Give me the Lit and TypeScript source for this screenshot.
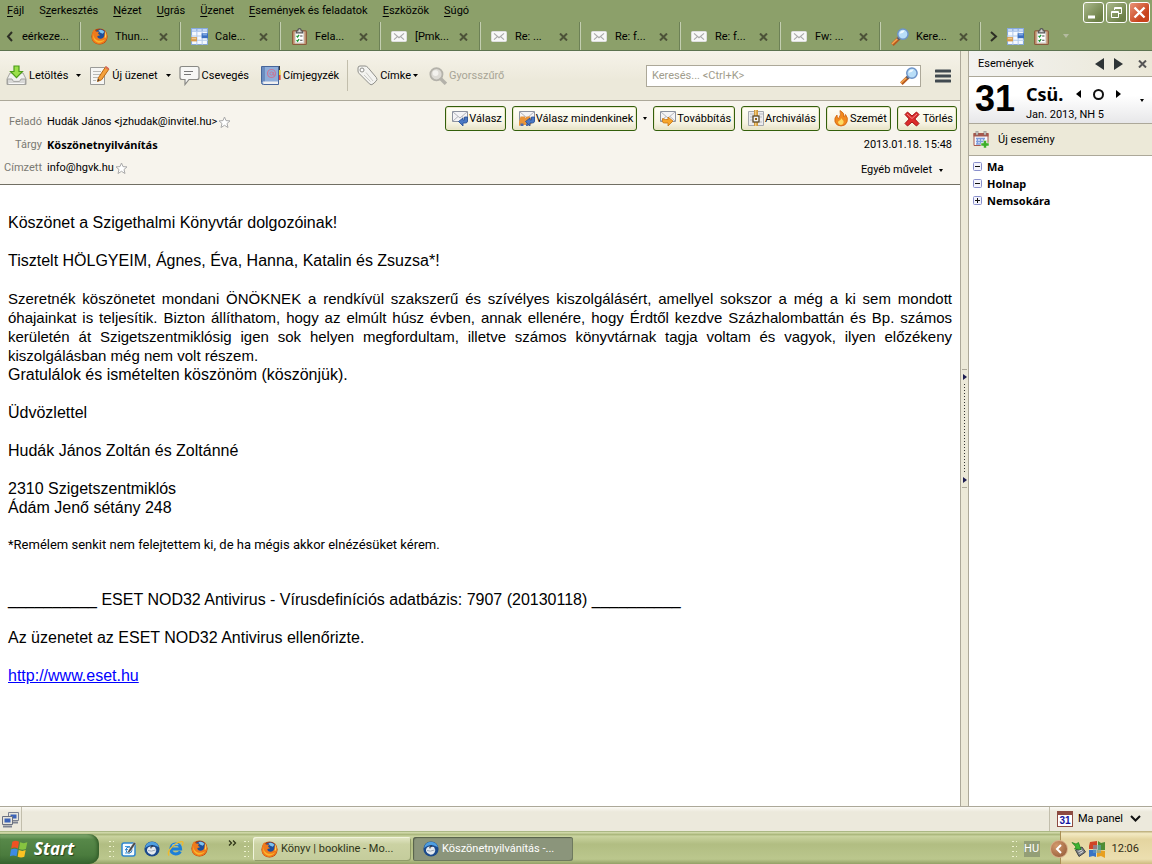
import { LitElement, html, css, svg, TemplateResult } from "lit";
import { customElement } from "lit/decorators.js";

const icon = (size: number, box: string, body: TemplateResult) =>
  html`<svg class="ico" width=${size} height=${size} viewBox=${box} aria-hidden="true">${body}</svg>`;

const firefox = () => icon(17, "0 0 16 16", svg`
  <circle cx="8" cy="8" r="7.6" fill="#b5410b"/><circle cx="8.8" cy="6.6" r="5.4" fill="#1d4f9c"/>
  <path d="M7 2.2Q10 .8 12.6 3.6L11 5.4 8.4 4.2z" fill="#7fc3ee"/>
  <path d="M.8 6Q1 2.8 3.2 1.2L4.6 3.4 7.6 3.6 6.6 5.4 8.6 6.8 6 7.6Q6 10.4 9.4 10.2 12.4 9.4 12.6 6L13.2 2.6Q16.4 6.4 14.8 10.6 12.4 15.2 8 15.2 2.4 14.8.8 10z" fill="#ee7a1b"/>
  <path d="M2 5Q2 9 5 11 8.6 13.4 13.4 10.6 10.6 14.4 6.8 13.8 2.4 12.6 2 8z" fill="#f9b52c"/>
  <path d="M13.2 3Q15 5.6 14.2 8.6L12.8 9.4Q13.6 6 13.2 3z" fill="#fbd05a"/>`);

const calendar = () => icon(17, "0 0 16 16", svg`
  <path d="M.5.5h15v15H.5z" fill="#f5f9ff" stroke="#87a9d8"/>
  <path d="M0 0h16v3.4H0z" fill="#86a9df"/><path d="M1 1h4v2H1zM6 1h4v2H6zM11 1h4v2h-4z" fill="#c5d8f4"/>
  <path d="M5.5 3v13M10.5 3v13M0 7.5h16M0 11.5h16" stroke="#b4cbeb"/>
  <path d="M10 5h6v4.6h-6z" fill="#3b6fc0"/><path d="M11 5.6h4v1.4h-4z" fill="#7da7e4"/>
  <path d="M0 8.6h5.6v4H0z" fill="#d79b4a"/><path d="M.8 9.4h4v1.2h-4z" fill="#f0c98d"/>`);

const tasks = () => icon(17, "0 0 16 16", svg`
  <rect x="1.5" y="2.5" width="13" height="13" rx="1" fill="#c49672" stroke="#8a5a3c"/>
  <path d="M4 4h8v10H4z" fill="#fff" stroke="#d9d9d9"/>
  <path d="M5 4.6V2.8h1.4Q6.4.6 8 .6t1.6 2.2H11v1.8z" fill="#d8d8d8" stroke="#555"/>
  <path d="M5.2 7.4l1 1 1.4-2M5.2 11.4l1 1 1.4-2" stroke="#1a9a32" stroke-width="1.2" fill="none"/>
  <path d="M8.6 7.6h2.2M8.6 11.6h2.2" stroke="#444"/>`);

const mail = () => icon(17, "0 0 17 17", svg`
  <rect x=".5" y="3.5" width="15" height="10" rx="1" fill="#f8f8f8" stroke="#dedede"/>
  <path d="M3 5.4l5 4.2 5-4.2M3 11.6l3.4-3M13 11.6l-3.4-3" fill="none" stroke="#aaa" stroke-width="1.2"/>`);

const magnifier = (gray = false) => icon(18, "0 0 16 16", gray
  ? svg`<path d="M10 10l5 5" stroke="#b4b2aa" stroke-width="3"/><circle cx="6.6" cy="6.4" r="5.4" fill="#dddbd5" stroke="#b4b2aa" stroke-width="1.6"/><circle cx="5.8" cy="5.4" r="2.6" fill="#f3f2ee"/>`
  : svg`<path d="M7.4 8.8l-6.2 6" stroke="#b75a1f" stroke-width="3.2"/><path d="M6.6 8.8l-5.8 5.4" stroke="#f5a64f" stroke-width="1.4"/><path d="M7.8 8.4L6 10" stroke="#555d70" stroke-width="2.6"/><circle cx="10.6" cy="5.4" r="4.6" fill="#b9def8" stroke="#6c93c8" stroke-width="1.3"/><path d="M7.6 5Q8.4 1.8 12 2.2 11.4 4.6 7.6 5z" fill="#f2faff"/>`);

const download = () => icon(21, "0 0 21 21", svg`
  <path d="M1 14l3-6h13l3 6v5.5H1z" fill="#f1f1ef" stroke="#a3a39f"/>
  <path d="M1.5 14H6l1.4 2.4h6.2L15 14h4.5v5H1.5z" fill="#d8d8d6" stroke="#a3a39f"/><path d="M2.5 18.5h16" stroke="#f8f8f8"/>
  <path d="M8 1h5v5.5h3.4L10.5 12.6 4.6 6.500H8z" fill="#9be04a" stroke="#4c9c19" stroke-width="1.2"/>`);

const compose = () => icon(21, "0 0 21 21", svg`
  <path d="M1.500 2.500h14v17h-14z" fill="#f6f6f4" stroke="#9b9b98"/>
  <path d="M4 6.500h8M4 9.500h7M4 12.500h5M4 15.500h3" stroke="#b9b9b6"/>
  <path d="M8.500 16.500L9.400 12.800 16.600 1.800 20 4 12.600 14.800z" fill="#f4a13c" stroke="#b96712"/>
  <path d="M16 2.800l3.200 2.200 1-1.600L17 1z" fill="#d96a5a"/><path d="M8.500 16.500l.5-2.500 1.800 1z" fill="#333"/>`);

const chat = () => icon(21, "0 0 21 21", svg`
  <path d="M3 1.500h15q2 0 2 2v9q0 2-2 2h-8L6 19.500v-5H3q-2 0-2-2v-9q0-2 2-2z" fill="#f7f7f5" stroke="#898985" stroke-width="1.200"/>
  <path d="M5 6.500h9M5 9.500h7" stroke="#777" stroke-width="1.200"/>`);

const book = () => icon(21, "0 0 21 21", svg`
  <path d="M18 1h2v5h-2z" fill="#3b3b3b"/><path d="M18 5h2.600v5H18z" fill="#e9d630"/><path d="M18 10h2.600v5H18z" fill="#e0463a"/>
  <path d="M1.500 1.500h17v18h-15q-2 0-2-2z" fill="#8fadd9" stroke="#46659a"/><path d="M2 2h3v15H2z" fill="#6a8cc0"/>
  <path d="M3 16.500h15v2.500H3.500z" fill="#f0f0f0"/>
  <circle cx="11.500" cy="8.500" r="4" fill="none" stroke="#c6799a" stroke-width="1.200"/><circle cx="11.500" cy="8.500" r="1.600" fill="none" stroke="#c6799a"/><path d="M13.300 7v3.200h2" stroke="#c6799a" fill="none"/>`);

const tag = () => icon(21, "0 0 21 21", svg`
  <path d="M1 3q0-2 2-2h5q1.600 0 3 1.600l8.400 10q1.400 2-.4 3.600L16 19q-2 1.600-3.600-.2L2.200 8.600Q1 7.400 1 6z" fill="#f3f3f0" stroke="#8f8f8a"/>
  <circle cx="5" cy="5" r="2" fill="#fff" stroke="#8f8f8a"/><path d="M9 7.500l7 8.500M7 10l6.500 6.500" stroke="#c9c9c5"/>`);

const envelope = (arrow: string, edge: string, flip: boolean, people = false) => icon(17, "0 0 17 17", svg`
  <path d="M.5 1.500h15v10H.5z" fill="#f4f4f6" stroke="#8d93a0"/><path d="M1 2l7 6 7-6M1 11l5-4.500M15 11l-5-4.500" fill="none" stroke="#b3b5bb"/>
  ${people ? svg`<path d="M0 16v-4l1.500-5.500h4l1 1.500 1-1.500H11l1.500 4V14l-2 1H2z" fill="#e8943a"/><path d="M1.500 16v-2.500h3V16zM7 16v-2.500h2.500V16z" fill="#4d6cab"/>` : ""}
  ${flip
    ? svg`<path d="M2.500 8.500v3q0 1.500 2 1.500H8v3l5-5-5-4v2.500H5.500z" fill=${arrow} stroke=${edge} stroke-width=".8"/>`
    : svg`<path d="M15.500 7v4q0 2-2 2H11v3L6.500 11.500 11 8v2h1.500V7z" fill=${arrow} stroke=${edge} stroke-width=".8"/>`}`);

const archive = () => icon(17, "0 0 17 17", svg`
  <path d="M.5 1.500h15v14H.5z" fill="#ececee" stroke="#a5a8ae"/><path d="M2 4h4M2 7h3M2 10h3M11 4h4M12 7h2M12 12h2" stroke="#b8bbc2"/>
  <path d="M6 0h4v16H6z" fill="#d29a3d"/><path d="M7 0h1.400v16H7z" fill="#f0ca7b"/>
  <rect x="5" y="6" width="6" height="6" fill="#f4f4f4" stroke="#5a4a2c" stroke-width="1.300"/><path d="M7 8h2v2H7z" fill="#8f5f16"/>`);

const flame = () => icon(17, "0 0 17 17", svg`
  <path d="M7 .5Q12 3 11 7q1 0 1.500-2.500Q15.500 8 14 12q-1.500 4-6 4-4.500 0-6-4Q1 7.500 4 5q-.2 3 1.500 3.500Q8.500 5 7 .5z" fill="#f18a1d" stroke="#d0620e" stroke-width=".8"/>
  <path d="M8 8q3 2.500 2.500 5-.8 2-2.700 2-2.300-.2-2.800-2.500Q5 11 6.500 10.500 8 10 8 8z" fill="#fdda62"/>`);

const cross = () => icon(16, "0 0 16 16", svg`
  <path d="M1 3.500L3.500 1 8 5 12.500 1 15 3.500 10.800 8 15 12.500 12.500 15 8 11l-4.500 4L1 12.500 5.200 8z" fill="#dd2b2b" stroke="#a51212"/><path d="M3 3l5 4.500L13 3" stroke="#f38a84" fill="none"/>`);

const star = () => icon(13, "0 0 13 13", svg`
  <path d="M6.500 1l1.500 3.600 4 .3-3 2.600 1 4-3.500-2.200L3 11.500l1-4-3-2.600 4-.3z" fill="#fff" stroke="#a9a9a9"/>`);

const newEvent = () => icon(17, "0 0 17 17", svg`
  <path d="M1 2.500h14v12H1z" fill="#f7f7fb" stroke="#a6584d"/><path d="M.5 2h15v3.500H.5z" fill="#a6584d"/><path d="M3 0h2v4H3zM11 0h2v4h-2z" fill="#ded8d0" stroke="#777" stroke-width=".6"/>
  <path d="M3 7.500h9M3 10.500h9M3 13h7M4.500 7v6M7.500 7v6M10.500 7v6" stroke="#7d9ddc" stroke-width="1.400"/>
  <path d="M10.500 9.500h3V12H16v3h-2.500v2h-3v-2H8v-3h2.500z" fill="#3fae2a" stroke="#e8f8e0" stroke-width=".5"/>`);

const day31 = () => html`<span class="day31"><span>31</span></span>`;

const network = () => icon(17, "0 0 17 17", svg`
  <path d="M6.500 1.500h10v8h-10z" fill="#e8e6dc" stroke="#7c8290"/><path d="M8.500 3.500h6v4h-6z" fill="#3b63b8"/><path d="M8 11.500h8" stroke="#7c8290" stroke-width="2"/>
  <path d="M.5 5.500h10v8H.5z" fill="#e8e6dc" stroke="#6a7080"/><path d="M2.500 7.500h6v4h-6z" fill="#3b63b8"/><path d="M1 15.500h9" stroke="#7c8290" stroke-width="2"/>`);

const flag = (s: number) => icon(s, "0 0 18 18", svg`
  <path d="M3 2.500Q6 .8 9 2.500L8 8.500Q5 7 2 8.500z" fill="#ee5124"/><path d="M10 3Q13 4.500 16.500 3L15.200 9Q12 10.500 9 9z" fill="#86c440"/>
  <path d="M1.800 9.500Q5 8 7.800 9.500L6.800 15.500Q4 14 .8 15.500z" fill="#3d8be4"/><path d="M8.800 10Q12 11.500 15 10L13.800 16Q11 17.500 7.800 16z" fill="#fcc223"/>`);

const notes = () => icon(16, "0 0 16 16", svg`
  <rect x="1" y="2" width="13" height="13" rx="2" fill="#f4faff" stroke="#2f86cf" stroke-width="1.500"/><path d="M4 5.500h5M4 8.500h3M4 12h5" stroke="#3f9be0" stroke-width="1.200"/>
  <circle cx="8" cy="9" r="3" fill="none" stroke="#2f7fc8"/><path d="M7 10l6-9 2 1.500-6 8.500-2.500 1z" fill="#4a4a4a" stroke="#eee" stroke-width=".4"/>`);

const thunderbird = () => icon(16, "0 0 16 16", svg`
  <circle cx="8" cy="8" r="7.600" fill="#1b4a8c"/><path d="M1 7Q2 1.200 8 .8q5.500.4 7 5.500L12 5Q7 2.500 1 7z" fill="#4f9fe0"/>
  <path d="M3 10Q2.600 6.500 6.500 5.600L11 6q2 2.500.6 5.400-1.600 2.600-4.600 2.200Q4 13 3 10z" fill="#e6ebf0"/>
  <path d="M4 9.500q3 1.500 7.500-.5" stroke="#9aa8b8" fill="none"/><path d="M6 5l2.800-.8L8.500 6.200z" fill="#2a2f38"/><circle cx="7" cy="6.800" r=".7" fill="#222"/>`);

const explorer = () => icon(17, "0 0 17 17", svg`
  <path d="M13.400 11.500Q11.800 14 8.700 14 4 13.600 3.800 9 4.200 4.400 8.700 4 13.400 4.400 13.600 9H5" fill="none" stroke="#1c7fd8" stroke-width="3"/>
  <path d="M5 5.500Q8 3 11.500 4.800" fill="none" stroke="#7cc6f6" stroke-width="1.200"/>
  <path d="M2 15.500Q-.5 12 6 6 12.500 1 15.500 1.800q1.200 1-.3 3.700" fill="none" stroke="#f0b92c" stroke-width="1.300"/>`);

const usb = () => icon(15, "0 0 15 15", svg`
  <path d="M4.500 8l6.500-3 3.500 5L8 14.500z" fill="#7d8185" stroke="#3f4347"/><path d="M7.500 9.500l3.500-1.500M8.500 11.500l3.500-2" stroke="#e2e4e6"/>
  <path d="M1 .5l4 1.500 2.500-1.500L10 7.500 3.500 7l1.500-2z" fill="#3fb534" stroke="#1d7a18" stroke-width=".7"/>`);

const winsq = () => icon(17, "0 0 17 17", svg`
  <path d="M1 1l7-1v8H0V5z" fill="#cf4327"/><path d="M9 0l3 2 4-1v8H9z" fill="#4f8d34"/><path d="M0 9h7v7l-3-1-4 1z" fill="#3a74c4"/><path d="M8 9l8 1v7l-4-2-4 1z" fill="#e8a020"/><path d="M4 4h8v8H4z" fill="#6aa8c8" opacity=".55"/>`);

const chevron = (d: string, w: number, h: number, color = "#2d2f25") =>
  html`<svg class="ico" width=${w} height=${h} viewBox="0 0 ${w} ${h}" aria-hidden="true"><path d=${d} fill="none" stroke=${color} stroke-width="2"/></svg>`;

const closeX = (color = "#4c5238") => html`<svg class="ico" width="9" height="8" viewBox="0 0 9 8" aria-hidden="true"><path d="M1 .5L8 7.500M8 .5L1 7.500" stroke=${color} stroke-width="2"/></svg>`;

const tri = (dir: "l" | "r" | "d", w: number, h: number, color = "#000") => {
  const d = dir === "l" ? `M${w} 0V${h}L0 ${h / 2}z` : dir === "r" ? `M0 0V${h}L${w} ${h / 2}z` : `M0 0H${w}L${w / 2} ${h}z`;
  return html`<svg class="ico" width=${w} height=${h} viewBox="0 0 ${w} ${h}" aria-hidden="true"><path d=${d} fill=${color}/></svg>`;
};

@customElement("app-root")
export class AppRoot extends LitElement {
  static styles = css`
    :host { display: flex; flex-direction: column; min-height: 100vh; overflow: hidden; background: #8ca06a;
      font: 11px/14px Roboto, "Noto Sans", sans-serif; color: #000; }
    * { box-sizing: border-box; }
    button, input { font: inherit; color: inherit; }
    button { background: none; border: 0; padding: 0; margin: 0; display: flex; align-items: center; white-space: nowrap; }
    .ico { display: block; flex: none; }
    .bold { font-family: "Noto Sans", sans-serif; font-weight: 700; }

    .top { position: relative; }
    .menu { display: flex; gap: 15px; height: 22px; padding: 0 7px; align-items: center; }
    .menu u { text-underline-offset: 2px; }
    .win { position: absolute; top: 2px; right: 2px; display: flex; gap: 2px; }
    .win button { width: 21px; height: 21px; border: 1px solid #fff; border-radius: 3px; justify-content: center;
      background: linear-gradient(135deg, #a9b88b, #6d8047 80%); }
    .win .x { background: linear-gradient(135deg, #e99478, #c8421c 70%); }
    .tabs { display: flex; height: 29px; border-bottom: 1px solid #5c7350; }
    .tab { display: flex; align-items: center; width: 100px; padding-top: 1px; padding-left: 10px; padding-right: 12px; border-left: 1px solid #c3ceb0;
      box-shadow: -1px 0 #6d8156; }
    .tab .label { flex: 1; gap: 7px; }
    .first { width: 80px; border: 0; box-shadow: none; padding: 1px 0 0 6px; gap: 7px; }
    .more { display: flex; flex: 1; align-items: center; padding-left: 8px; gap: 9px; border-left: 1px solid #c3ceb0; box-shadow: -1px 0 #6d8156; }
    .gray { padding-left: 4px; }

    .main { display: flex; flex: 1; background: #ece9d8; }
    .mailcol { flex: 1; min-width: 0; display: flex; flex-direction: column; border-right: 1px solid #aca899; }
    .toolbar { display: flex; align-items: center; height: 50px; padding: 0 9px 0 6px; border-bottom: 1px solid #aca899;
      background: linear-gradient(#f6f3ea, #ece9da 60%); }
    .tool { gap: 2px; }
    .drop { padding: 8px; }
    .tool .ico + .ico, .tag { margin-left: 0; }
    .tool.next { margin-left: 11px; }
    .off { color: #a8a596; }
    .sep { width: 1px; height: 31px; background: #c2beac; margin: 0 9px 0 8px; }
    .search { display: flex; align-items: center; width: 275px; height: 22px; margin-left: auto; margin-right: 14px; border: 1px solid #aca899; background: #fff; padding: 0 2px 0 5px; }
    .search input { flex: 1; min-width: 0; border: 0; outline: 0; padding: 0; background: none; }
    .search input::placeholder { color: #a09c8c; opacity: 1; }

    .head { display: flex; justify-content: space-between; height: 84px; background: #f7f4ed; border-bottom: 1px solid #716f64; }
    .fields { display: grid; grid-template-columns: 42px auto; column-gap: 5px; row-gap: 1px; margin: 0; padding-top: 10px; align-content: start; }
    .fields dt { text-align: right; color: #7b7a73; line-height: 22px; white-space: nowrap; }
    .fields dd { margin: 0; display: flex; align-items: center; gap: 1px; line-height: 22px; }
    .actions { display: flex; flex-direction: column; align-items: flex-end; padding: 5px 3px 0 0; }
    .btns { display: flex; align-items: center; gap: 6px; }
    .btn { height: 25px; border: 1px solid #335f0b; border-radius: 3px; padding: 0 3px 0 6px;
      background: linear-gradient(#fffff8, #f6f3e2 70%, #e6e2c6); box-shadow: inset 0 0 0 1px #eae7c8; }
    .btn.roomy { gap: 3px; }
    .date { line-height: 22px; margin-top: 3px; padding-right: 5px; }
    .other { line-height: 22px; margin-top: 3px; padding-right: 14px; gap: 7px; }

    .body { flex: 1; background: #fff; padding: 28px 8px 8px; font: 16px/19px "Liberation Sans", Arial, sans-serif; }
    .body p { margin: 0 0 19px; }
    .body .just { font-size: 15px; text-align: justify; margin: 0; }
    .just span { display: block; text-align-last: justify; }
    .just span:last-child { text-align-last: left; }
    .body .small { font: 13px/18px Roboto, "Noto Sans", sans-serif; margin-bottom: 36px; }
    .body a { color: #00f; }

    .split { width: 7px; display: flex; flex-direction: column; align-items: center; justify-content: center; gap: 4px; }
    .dots { width: 1px; height: 89px; background: repeating-linear-gradient(#333 0 1px, transparent 1px 3px); }
    .tick { width: 5px; height: 1px; background: #aca899; }

    .side { width: 184px; border-left: 1px solid #aca899; background: #fff; }
    .sidehead { display: flex; align-items: center; height: 26px; padding: 0 5px 0 9px; border-bottom: 1px solid #aca899;
      background: linear-gradient(90deg, #f2f2f0, #ebe8d8); }
    .sidehead .t { flex: 1; }
    .sidehead .a { margin-right: 10px; }
    .sidehead .b { margin-right: 15px; }
    .day { display: flex; height: 47px; padding: 0 8px 0 6px; border-bottom: 1px solid #aca899; background: linear-gradient(#fff 40%, #e7e7e9); }
    .num { font: 700 36px/44px "Liberation Sans", Arial, sans-serif; width: 51px; }
    .when { flex: 1; padding-top: 5px; line-height: 18px; }
    .wd { display: flex; align-items: center; font-size: 18px; line-height: 24px; }
    .nav { display: flex; align-items: center; gap: 12px; margin-left: auto; margin-right: 19px; }
    .ring { width: 11px; height: 11px; border: 2px solid #111; border-radius: 50%; }
    .caret { align-self: center; }
    .newev { width: 100%; height: 32px; padding-left: 4px; gap: 8px; background: #ece9d8; border-bottom: 1px solid #aca899; }
    .tree { list-style: none; margin: 0; padding: 2px 0 0 4px; }
    .tree li { display: flex; align-items: center; gap: 5px; height: 17px; }

    .status { display: flex; align-items: stretch; height: 25px; border-top: 1px solid #aca899; background: linear-gradient(#fbfaf5, #ece9dc 20%, #ece9dc); }
    .status .net { display: flex; align-items: center; padding: 0 2px; border-right: 1px solid #c2beac; }
    .panel { margin-left: auto; padding: 0 11px 0 7px; gap: 5px; border-left: 1px solid #c2beac; }
    .panel .ico { margin-left: 2px; }
    .day31 { width: 16px; height: 16px; border: 1px solid #8d4b41; border-top-width: 4px; background: #fff; display: flex; justify-content: center; align-items: center; font: 700 10px/10px "Liberation Sans", sans-serif; color: #1414a0; }

    .taskbar { display: flex; align-items: center; height: 33px;
      background: linear-gradient(#9aa873, #dfe7b9 6%, #a3b074 9%, #c9d39f 16%, #b1bd82 40%, #bbc78d 85%, #93a066); }
    .start { width: 99px; height: 30px; margin-top: 3px; padding-left: 9px; gap: 5px; border-radius: 0 10px 10px 0; color: #fff; font: italic 700 17px/24px "Open Sans", sans-serif;
      text-shadow: 1px 1px 1px #26431b; background: linear-gradient(#8fb57b, #578849 18%, #4b7c3e 70%, #376530); box-shadow: inset -2px 0 3px #36602b; align-self: flex-start; }
    .grip { width: 6px; height: 18px; background: radial-gradient(circle, #eef2cf 1px, transparent 1px) 0 0 / 4px 5px; flex: none; }
    .quick { display: flex; align-items: center; gap: 7px; padding: 2px 0 0 7px; }
    .grip.g1 { margin-left: 9px; }
    .raq { margin: 0 6px 10px 20px; }
    .task { height: 24px; width: 158px; margin: 3px 0 0 2px; border-radius: 3px; padding-left: 8px; gap: 3px; color: #2f3518; background: linear-gradient(#e3e7c6, #cbd2a3 30%, #c4cc9b); box-shadow: inset 1px 1px #f1f4dc, inset -1px -1px #919c6a; }
    .task.on { color: #fff; width: 160px; background: #8b957b; box-shadow: inset 1px 1px 1px #555f49, inset -1px -1px #6f7a5f; padding-left: 10px; }
    .task.f { margin-left: 4px; }
    .lang { background: #939e76; color: #fff; width: 16px; height: 16px; display: grid; place-items: center; margin: 3px 0 0 7px; }
    .tray { display: flex; align-items: center; align-self: stretch; gap: 3px; margin-left: 20px; padding: 3px 13px 0 0; border-left: 1px solid #a88f55; background: linear-gradient(#b6a874, #f3eac3 8%, #e4d5a0 25%, #ecdfb0 85%, #cdbb80); color: #2f2a14; }
    .round { width: 18px; height: 18px; border-radius: 50%; margin-left: -11px; border: 1px solid #d9b08b; background: radial-gradient(circle at 35% 30%, #d49a6d, #8d5432); justify-content: center; }
    .clock { margin-left: 3px; }
    .rest { margin-left: auto; display: flex; align-items: center; align-self: stretch; }
  `;

  private menu = [["", "F", "ájl"], ["S", "z", "erkesztés"], ["", "N", "ézet"], ["", "U", "grás"], ["", "Ü", "zenet"], ["", "E", "semények és feladatok"], ["", "E", "szközök"], ["", "S", "úgó"]];
  private tabs: [() => TemplateResult, string][] = [[firefox, "Thun..."], [calendar, "Cale..."], [tasks, "Fela..."], [mail, "[Pmk..."], [mail, "Re: ..."], [mail, "Re: f..."], [mail, "Re: f..."], [mail, "Fw: ..."], [() => magnifier(), "Kere..."]];

  render() {
    return html`
      <header class="top">
        <nav class="menu">${this.menu.map(([a, b, c]) => html`<button><span>${a}<u>${b}</u>${c}</span></button>`)}</nav>
        <div class="win">
          <button aria-label="Kis méret"><svg width="19" height="19" viewBox="0 0 19 19"><path d="M4 14h7" stroke="#fff" stroke-width="3"/></svg></button>
          <button aria-label="Előző méret"><svg width="19" height="19" viewBox="0 0 19 19" fill="none" stroke="#fff"><path d="M4.500 8.500h7v6h-7zM4 9.500h8M7.500 7V4.500h7v6H12M7 5.500h8"/></svg></button>
          <button class="x" aria-label="Bezárás"><svg width="19" height="19" viewBox="0 0 19 19"><path d="M4.500 4.500l10 10M14.500 4.500l-10 10" stroke="#fff" stroke-width="2.400"/></svg></button>
        </div>
        <div class="tabs">
          <div class="tab first"><button aria-label="Vissza">${chevron("M6 1L2 5.500 6 10", 9, 11)}</button><button>eérkeze...</button></div>
          ${this.tabs.map(([i, t]) => html`<div class="tab"><button class="label">${i()}<span>${t}</span></button><button aria-label="Lap bezárása">${closeX()}</button></div>`)}
          <div class="more"><button aria-label="Előre">${chevron("M2 1L7 5.500 2 10", 9, 11)}</button><button aria-label="Naptár">${calendar()}</button><button aria-label="Feladatok">${tasks()}</button><button class="gray" aria-label="Lapok">${tri("d", 6, 4, "#b4bba0")}</button></div>
        </div>
      </header>
      <main class="main">
        <section class="mailcol">
          <div class="toolbar">
            <button class="tool">${download()}Letöltés</button><button class="drop" aria-label="Letöltés menü">${tri("d", 5, 3)}</button>
            <button class="tool">${compose()}Új üzenet</button><button class="drop" aria-label="Üzenet menü">${tri("d", 5, 3)}</button>
            <button class="tool">${chat()}Csevegés</button>
            <button class="tool next">${book()}Címjegyzék</button>
            <span class="sep"></span>
            <button class="tool">${tag()}Címke ${tri("d", 5, 3)}</button>
            <button class="tool off next" disabled>${magnifier(true)}Gyorsszűrő</button>
            <label class="search"><input type="text" aria-label="Keresés" placeholder="Keresés... &lt;Ctrl+K&gt;" />${magnifier()}</label>
            <button aria-label="Menü"><svg class="ico" width="16" height="14" viewBox="0 0 16 14"><path d="M1 2h14M1 7h14M1 12h14" stroke="#414a50" stroke-width="3" stroke-linecap="round"/></svg></button>
          </div>
          <div class="head">
            <dl class="fields">
              <dt>Feladó</dt><dd>Hudák János &lt;jzhudak@invitel.hu&gt;${star()}</dd>
              <dt>Tárgy</dt><dd class="bold">Köszönetnyilvánítás</dd>
              <dt>Címzett</dt><dd>info@hgvk.hu${star()}</dd>
            </dl>
            <div class="actions">
              <div class="btns">
                <button class="btn">${envelope("#4a78c4", "#254c92", false)}Válasz</button>
                <button class="btn">${envelope("#4a78c4", "#254c92", false, true)}Válasz mindenkinek</button>
                <button aria-label="Válasz menü">${tri("d", 4, 3)}</button>
                <button class="btn">${envelope("#f7a62c", "#c87410", true)}Továbbítás</button>
                <button class="btn">${archive()}Archiválás</button>
                <button class="btn">${flame()}Szemét</button>
                <button class="btn roomy">${cross()}Törlés</button>
              </div>
              <time class="date">2013.01.18. 15:48</time>
              <button class="other">Egyéb művelet ${tri("d", 4, 3)}</button>
            </div>
          </div>
          <article class="body">
            <p>Köszönet a Szigethalmi Könyvtár dolgozóinak!</p>
            <p>Tisztelt HÖLGYEIM, Ágnes, Éva, Hanna, Katalin és Zsuzsa*!</p>
            <p class="just"><span>Szeretnék köszönetet mondani ÖNÖKNEK a rendkívül szakszerű és szívélyes kiszolgálásért, amellyel sokszor a még a ki sem mondott</span>
              <span>óhajainkat is teljesítik. Bizton állíthatom, hogy az elmúlt húsz évben, annak ellenére, hogy Érdtől kezdve Százhalombattán és Bp. számos</span>
              <span>kerületén át Szigetszentmiklósig igen sok helyen megfordultam, illetve számos könyvtárnak tagja voltam és vagyok, ilyen előzékeny</span>
              <span>kiszolgálásban még nem volt részem.</span></p>
            <p>Gratulálok és ismételten köszönöm (köszönjük).</p>
            <p>Üdvözlettel</p>
            <p>Hudák János Zoltán és Zoltánné</p>
            <p>2310 Szigetszentmiklós<br />Ádám Jenő sétány 248</p>
            <p class="small">*Remélem senkit nem felejtettem ki, de ha mégis akkor elnézésüket kérem.</p>
            <p>__________ ESET NOD32 Antivirus - Vírusdefiníciós adatbázis: 7907 (20130118) __________</p>
            <p>Az üzenetet az ESET NOD32 Antivirus ellenőrizte.</p>
            <p><a href="http://www.eset.hu">http://www.eset.hu</a></p>
          </article>
        </section>
        <div class="split"><span class="tick"></span>${tri("r", 4, 6, "#1c1c50")}<span class="dots"></span>${tri("r", 4, 6, "#1c1c50")}<span class="tick"></span></div>
        <aside class="side">
          <div class="sidehead"><span class="t">Események</span><button class="a" aria-label="Előző">${tri("l", 9, 12, "#2e3436")}</button><button class="b" aria-label="Következő">${tri("r", 9, 12, "#2e3436")}</button><button aria-label="Bezárás">${closeX("#555")}</button></div>
          <div class="day">
            <span class="num">31</span>
            <div class="when">
              <div class="wd bold">Csü.<span class="nav"><button aria-label="Előző nap">${tri("l", 5, 8)}</button><button class="ring" aria-label="Ma"></button><button aria-label="Következő nap">${tri("r", 5, 8)}</button></span></div>
              <div>Jan. 2013, NH 5</div>
            </div>
            <button class="caret" aria-label="Nap menü">${tri("d", 4, 3)}</button>
          </div>
          <button class="newev">${newEvent()}Új esemény</button>
          <ul class="tree">
            ${[["Ma", false], ["Holnap", false], ["Nemsokára", true]].map(([t, plus]) => html`<li class="bold"><svg class="ico" width="9" height="9" viewBox="0 0 9 9"><rect x=".5" y=".5" width="8" height="8" rx="1" fill="#f4f4fc" stroke="#8a90cc"/><path d=${plus ? "M2 4.500h5M4.500 2v5" : "M2 4.500h5"} stroke="#111"/></svg>${t}</li>`)}
          </ul>
        </aside>
      </main>
      <div class="status"><span class="net">${network()}</span><button class="panel">${day31()}Ma panel ${chevron("M1 1l4.500 4.500L10 1", 11, 8, "#111")}</button></div>
      <footer class="taskbar">
        <button class="start">${flag(20)}Start</button>
        <span class="grip g1"></span>
        <div class="quick"><button aria-label="Jegyzetek">${notes()}</button><button aria-label="Thunderbird">${thunderbird()}</button><button aria-label="Internet Explorer">${explorer()}</button><button aria-label="Firefox">${firefox()}</button></div>
        <button class="raq" aria-label="Továbbiak"><svg class="ico" width="9" height="6" viewBox="0 0 9 6"><path d="M1 .5L3.500 3 1 5.500M5 .5L7.500 3 5 5.500" fill="none" stroke="#2f3518" stroke-width="1.300"/></svg></button>
        <span class="grip"></span>
        <button class="task f">${firefox()}Könyv | bookline - Mo...</button>
        <button class="task on">${thunderbird()}Köszönetnyilvánítás -...</button>
        <div class="rest"><span class="grip"></span><span class="lang">HU</span>
          <div class="tray"><button class="round" aria-label="Rejtett ikonok">${chevron("M6 1L2 5l4 4", 8, 10, "#fff")}</button>${usb()}${winsq()}<span class="clock">12:06</span></div>
        </div>
      </footer>`;
  }
}
